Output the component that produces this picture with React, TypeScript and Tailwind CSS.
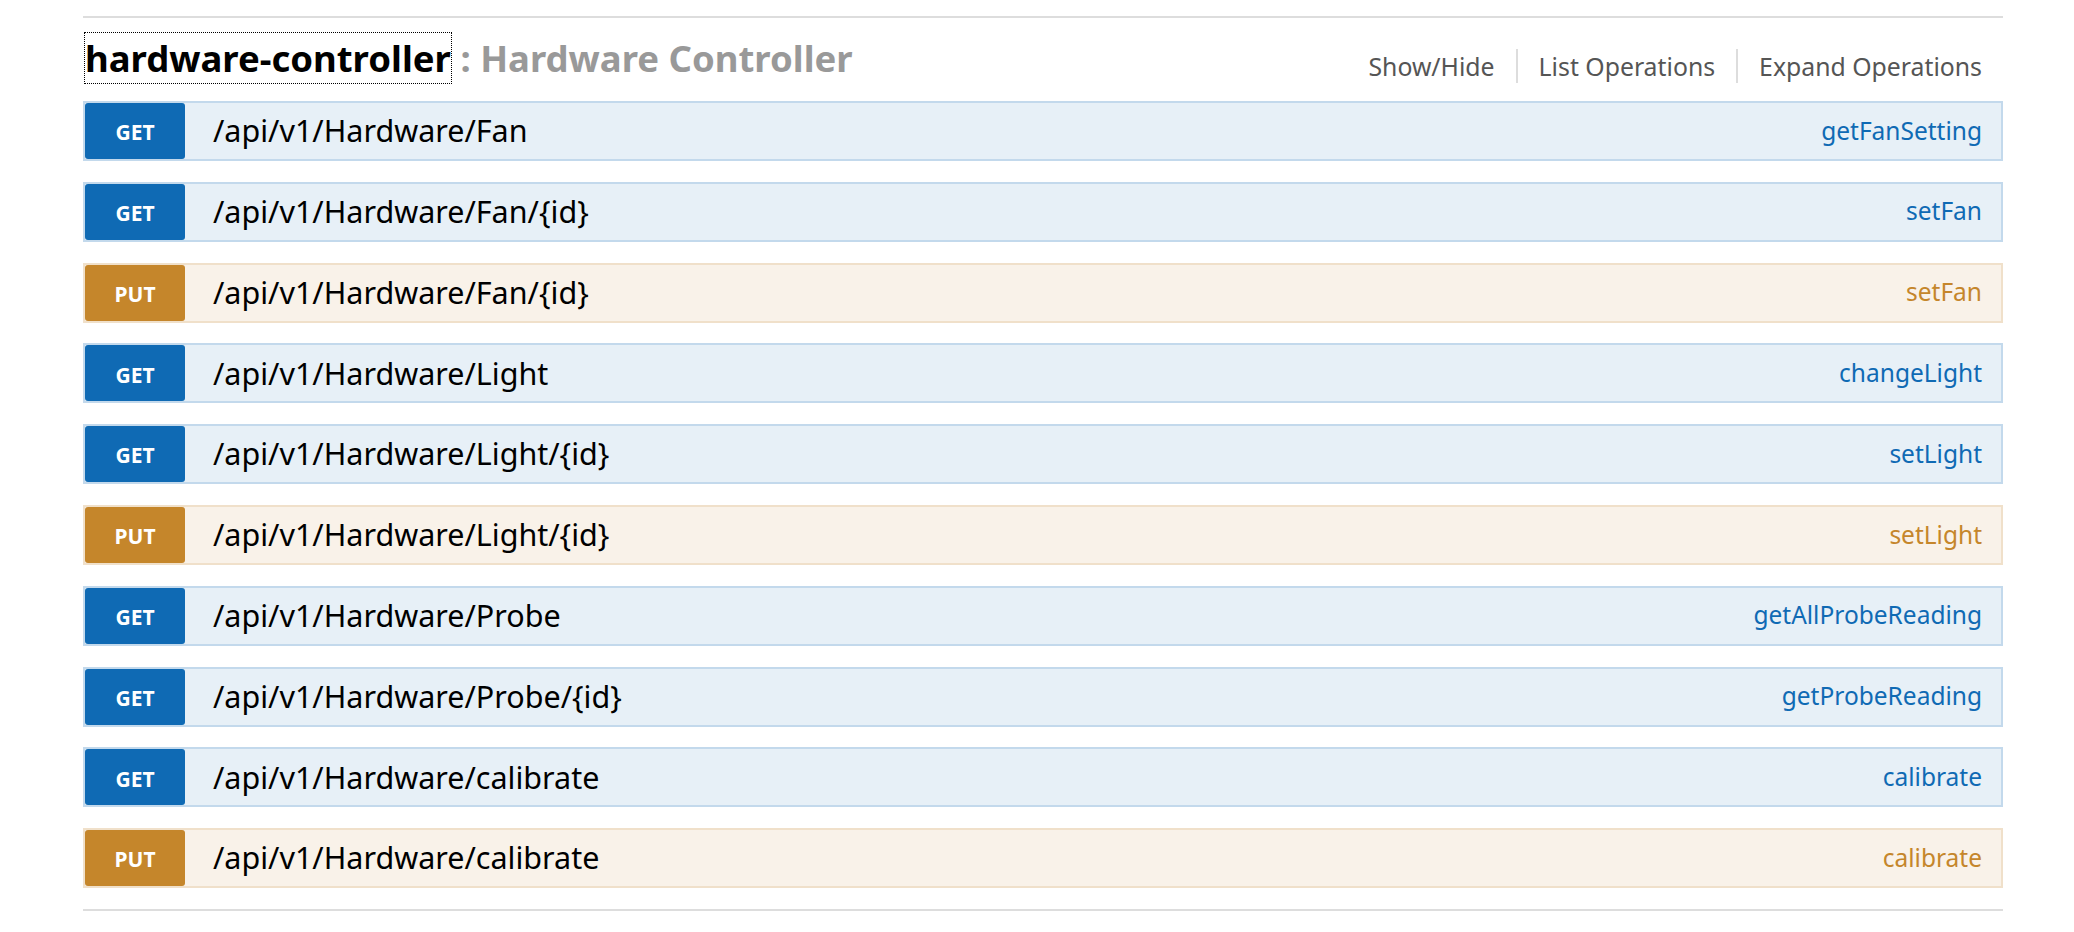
import React from 'react'

type Op = { method: 'GET' | 'PUT'; path: string; nickname: string }

const ops: Op[] = [
  { method: 'GET', path: '/api/v1/Hardware/Fan', nickname: 'getFanSetting' },
  { method: 'GET', path: '/api/v1/Hardware/Fan/{id}', nickname: 'setFan' },
  { method: 'PUT', path: '/api/v1/Hardware/Fan/{id}', nickname: 'setFan' },
  { method: 'GET', path: '/api/v1/Hardware/Light', nickname: 'changeLight' },
  { method: 'GET', path: '/api/v1/Hardware/Light/{id}', nickname: 'setLight' },
  { method: 'PUT', path: '/api/v1/Hardware/Light/{id}', nickname: 'setLight' },
  { method: 'GET', path: '/api/v1/Hardware/Probe', nickname: 'getAllProbeReading' },
  { method: 'GET', path: '/api/v1/Hardware/Probe/{id}', nickname: 'getProbeReading' },
  { method: 'GET', path: '/api/v1/Hardware/calibrate', nickname: 'calibrate' },
  { method: 'PUT', path: '/api/v1/Hardware/calibrate', nickname: 'calibrate' },
]

function OperationRow({ op }: { op: Op }) {
  const isGet = op.method === 'GET'
  return (
    <li
      className={
        isGet
          ? 'flex items-center h-[60px] border-2 border-[#c3d9ec] bg-[#e7f0f7]'
          : 'flex items-center h-[60px] border-2 border-[#f0e0ca] bg-[#f9f2e9]'
      }
    >
      <span
        className={
          isGet
            ? 'flex items-center justify-center w-[100px] h-full pt-[4px] rounded-[3px] bg-[#0f6ab4] text-white text-[21px] font-bold'
            : 'flex items-center justify-center w-[100px] h-full pt-[4px] rounded-[3px] bg-[#c5862b] text-white text-[21px] font-bold'
        }
      >
        {op.method}
      </span>
      <span className="ml-[28px] text-[30.5px] text-black">{op.path}</span>
      <span
        className={
          isGet
            ? 'ml-auto pr-[19px] text-[24.5px] text-[#0f6ab4]'
            : 'ml-auto pr-[19px] text-[24.5px] text-[#c5862b]'
        }
      >
        {op.nickname}
      </span>
    </li>
  )
}

export default function App() {
  return (
    <div className="min-h-[932px] bg-white font-['Noto_Sans',sans-serif]">
      <div className="ml-[83px] w-[1920px]">
        <div className="mt-[16px] h-[2px] bg-[#ddd]" />

        {/* resource heading */}
        <div className="flex justify-between items-start h-[83px] pt-[18px]">
          <h2 className="text-[36.5px] font-bold leading-[45px] ml-[2px]">
            <span className="outline-1 outline-dotted outline-black text-black">hardware-controller</span>
            <span className="text-[#999]"> : Hardware Controller</span>
          </h2>
          <ul className="flex mt-[13px] text-[24.8px] leading-[34px] text-[#555]">
            <li className="px-[21px]">Show/Hide</li>
            <li className="px-[21px] border-l-2 border-[#ddd]">List Operations</li>
            <li className="pl-[21px] pr-[21px] border-l-2 border-[#ddd]">Expand Operations</li>
          </ul>
        </div>

        <ul className="flex flex-col gap-[20.8px]">
          {ops.map((op, i) => (
            <OperationRow key={i} op={op} />
          ))}
        </ul>

        <div className="mt-[21px] h-[2px] bg-[#ddd]" />
      </div>
    </div>
  )
}
